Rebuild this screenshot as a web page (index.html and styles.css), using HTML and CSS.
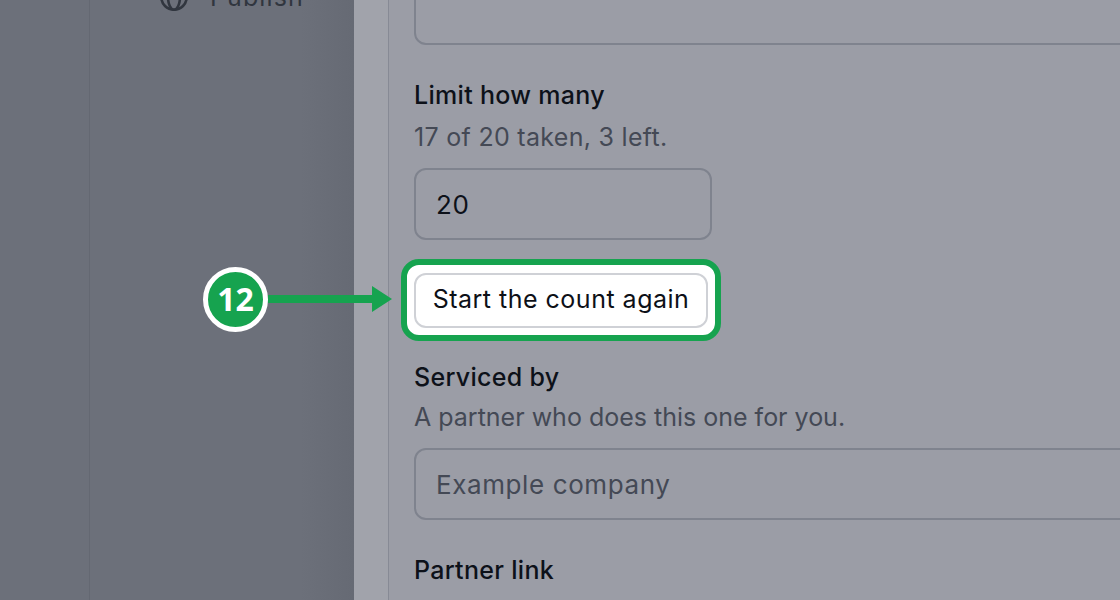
FILE: index.html
```html
<!DOCTYPE html>
<html lang="en">
<head>
<meta charset="utf-8">
<title>Start the count again</title>
<link rel="stylesheet" href="styles.css">
</head>
<body>
<div class="app">
  <aside class="side">
    <div class="rail"></div>
    <nav class="nav">
      <div class="nav-item">
        <svg class="nav-icon" viewBox="0 0 28 28" fill="none" stroke="currentColor" stroke-width="2.6"><circle cx="14" cy="14" r="12.7"/><ellipse cx="14" cy="14" rx="6" ry="12.7"/><path d="M1 14h26"/></svg>
        <span>Publish</span>
      </div>
    </nav>
  </aside>
  <main class="panel">
    <div class="form">
      <div class="input first"></div>
      <section class="field limit">
        <h3 class="label">Limit how many</h3>
        <p class="help">17 of 20 taken, 3 left.</p>
        <div class="input short value">20</div>
      </section>
      <div class="ring"><button class="reset">Start the count again</button></div>
      <section class="field serviced">
        <h3 class="label">Serviced by</h3>
        <p class="help">A partner who does this one for you.</p>
        <div class="input placeholder">Example company</div>
      </section>
      <section class="field partner">
        <h3 class="label">Partner link</h3>
        <p class="help">Link to their page.</p>
      </section>
    </div>
  </main>
</div>
<div class="arrow"><span class="shaft"></span><span class="head"></span></div>
<div class="badge">12</div>
</body>
</html>
```
FILE: styles.css
```css
* { box-sizing: border-box; }
html, body { margin: 0; height: 100%; overflow: hidden; }
body { width: 1120px; height: 600px; position: relative; font-family: Inter, "Liberation Sans", sans-serif; }
.app { display: flex; height: 600px; overflow: hidden; background: #6c707a; }
.side { width: 354px; flex: none; display: flex; background: linear-gradient(90deg, #6c707a 0, #6c707a 85%, #666a74 100%); }
.rail { width: 90px; flex: none; border-right: 1px solid #646872; }
.nav { flex: 1; margin-top: -18px; padding-left: 70px; }
.nav-item { display: flex; align-items: center; gap: 22px; font-size: 25px; letter-spacing: 1.1px; line-height: 30px; color: #31363f; height: 30px; }
.nav-icon { width: 28px; height: 28px; flex: none; }
.panel { flex: 1; background: #a1a3ab; padding-left: 34px; }
.form { display: flow-root; background: #9b9da6; border-left: 1px solid #878a95; height: 100%; padding-left: 25px; }
.input { border: 2px solid #7f838e; border-radius: 12px; height: 72px; font-size: 26px; letter-spacing: 0.6px; padding-left: 20px; display: flex; align-items: center; width: 760px; }
.first { margin-top: -27px; }
.field { margin: 0; }
.limit { margin-top: 33px; }
.limit .help { margin: 9px 0 15px; }
.label { margin: 0; font-size: 25px; font-weight: 500; letter-spacing: 0.3px; line-height: 34px; color: #0d1119; }
.help { margin: 8px 0 15px; font-size: 25px; letter-spacing: 0.3px; line-height: 32px; color: #444955; }
.short { width: 298px; }
.value { color: #0d1119; }
.placeholder { color: #444955; }
.ring { width: 320px; height: 82px; margin: 19px 0 0 -13px; padding: 8px 7px 7px; background: #fff; border: 6px solid #16a34f; border-radius: 18px; }
.reset { display: block; width: 294px; height: 55px; background: #fff; border: 2px solid #cfd1d6; border-radius: 12px; font: 400 25px Inter, "Liberation Sans", sans-serif; letter-spacing: 0.5px; color: #0d1017; padding: 0 0 3px; }
.serviced { margin-top: 19px; }
.serviced .help { margin: 7px 0 15px; letter-spacing: 0; }
.partner { margin-top: 33px; }
.arrow { position: absolute; left: 268px; top: 286px; display: flex; align-items: center; height: 26px; }
.shaft { width: 104px; height: 8px; background: #16a34f; }
.head { width: 0; height: 0; border-left: 20px solid #16a34f; border-top: 13px solid transparent; border-bottom: 13px solid transparent; }
.badge { position: absolute; left: 203px; top: 267px; width: 65px; height: 65px; padding-bottom: 3px; border-radius: 50%; background: #16a34f; border: 5px solid #fff; color: #fff; font: 700 32px "Open Sans", sans-serif; display: flex; align-items: center; justify-content: center; }
```
